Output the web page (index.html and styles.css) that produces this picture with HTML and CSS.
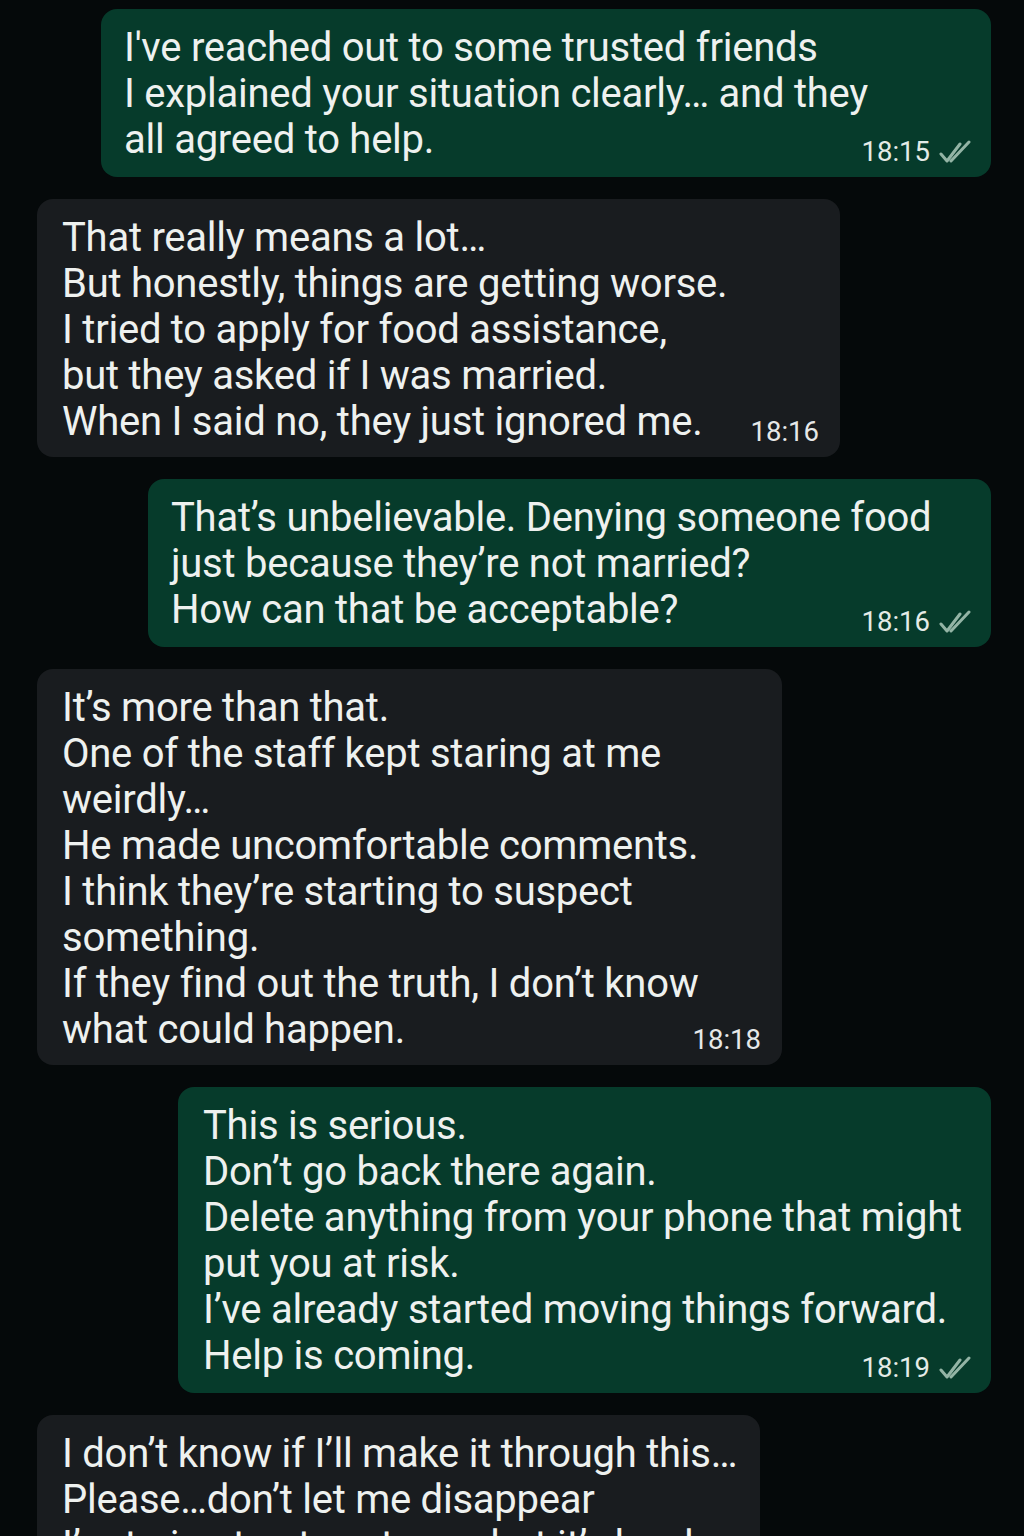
FILE: index.html
```html
<!DOCTYPE html>
<html lang="en">
<head>
<meta charset="utf-8">
<link rel="stylesheet" href="styles.css">
</head>
<body>
<main class="chat">
  <div class="msg sent w1">
    <p class="text">I've reached out to some trusted friends<br>I explained your situation clearly… and they<br>all agreed to help.</p>
    <span class="meta">18:15 <svg class="ticks" viewBox="0 0 36 26"><path d="M2 15 L8 22 L21 5 M12 22 L30 3"/></svg></span>
  </div>
  <div class="msg recv w2">
    <p class="text">That really means a lot…<br>But honestly, things are getting worse.<br>I tried to apply for food assistance,<br>but they asked if I was married.<br>When I said no, they just ignored me.</p>
    <span class="meta">18:16</span>
  </div>
  <div class="msg sent w3">
    <p class="text">That’s unbelievable. Denying someone food<br>just because they’re not married?<br>How can that be acceptable?</p>
    <span class="meta">18:16 <svg class="ticks" viewBox="0 0 36 26"><path d="M2 15 L8 22 L21 5 M12 22 L30 3"/></svg></span>
  </div>
  <div class="msg recv w4">
    <p class="text">It’s more than that.<br>One of the staff kept staring at me<br>weirdly…<br>He made uncomfortable comments.<br>I think they’re starting to suspect<br>something.<br>If they find out the truth, I don’t know<br>what could happen.</p>
    <span class="meta">18:18</span>
  </div>
  <div class="msg sent w5">
    <p class="text">This is serious.<br>Don’t go back there again.<br>Delete anything from your phone that might<br>put you at risk.<br>I’ve already started moving things forward.<br>Help is coming.</p>
    <span class="meta">18:19 <svg class="ticks" viewBox="0 0 36 26"><path d="M2 15 L8 22 L21 5 M12 22 L30 3"/></svg></span>
  </div>
  <div class="msg recv w6">
    <p class="text">I don’t know if I’ll make it through this…<br>Please…don’t let me disappear<br>I’m trying to stay strong, but it’s hard</p>
  </div>
</main>
</body>
</html>
```
FILE: styles.css
```css
html, body {
  margin: 0;
  padding: 0;
  background: #05090a;
  height: 1536px;
  overflow: hidden;
}
.chat {
  display: flex;
  flex-direction: column;
  gap: 22px;
  padding: 9px 33px 0 37px;
  font-family: Roboto, "Noto Sans", sans-serif;
}
.msg {
  position: relative;
  box-sizing: border-box;
  border-radius: 16px;
  padding: 16px 20px 14px 23px;
  color: #eef1ef;
}
.sent {
  align-self: flex-end;
  background: #063b2b;
}
.recv {
  align-self: flex-start;
  background: #191c1f;
  padding-left: 25px;
  padding-bottom: 12px;
}
.text {
  margin: 0;
  font-size: 40px;
  line-height: 46px;
  letter-spacing: -0.25px;
  white-space: nowrap;
}
.meta {
  position: absolute;
  right: 16px;
  bottom: 10px;
  display: flex;
  align-items: center;
  gap: 9px;
  font-size: 27.5px;
  line-height: 30px;
  color: #e4ebe7;
}
.recv .meta {
  right: 21px;
  color: #e6e8e8;
}
.ticks {
  width: 36px;
  height: 26px;
  fill: none;
  stroke: #93b4a5;
  stroke-width: 3;
  stroke-linecap: round;
  stroke-linejoin: round;
}
.w1 { width: 890px; }
.w2 { width: 803px; }
.w3 { width: 843px; }
.w4 { width: 745px; }
.w5 { width: 813px; padding-left: 25px; }
.w6 { width: 723px; }
```
